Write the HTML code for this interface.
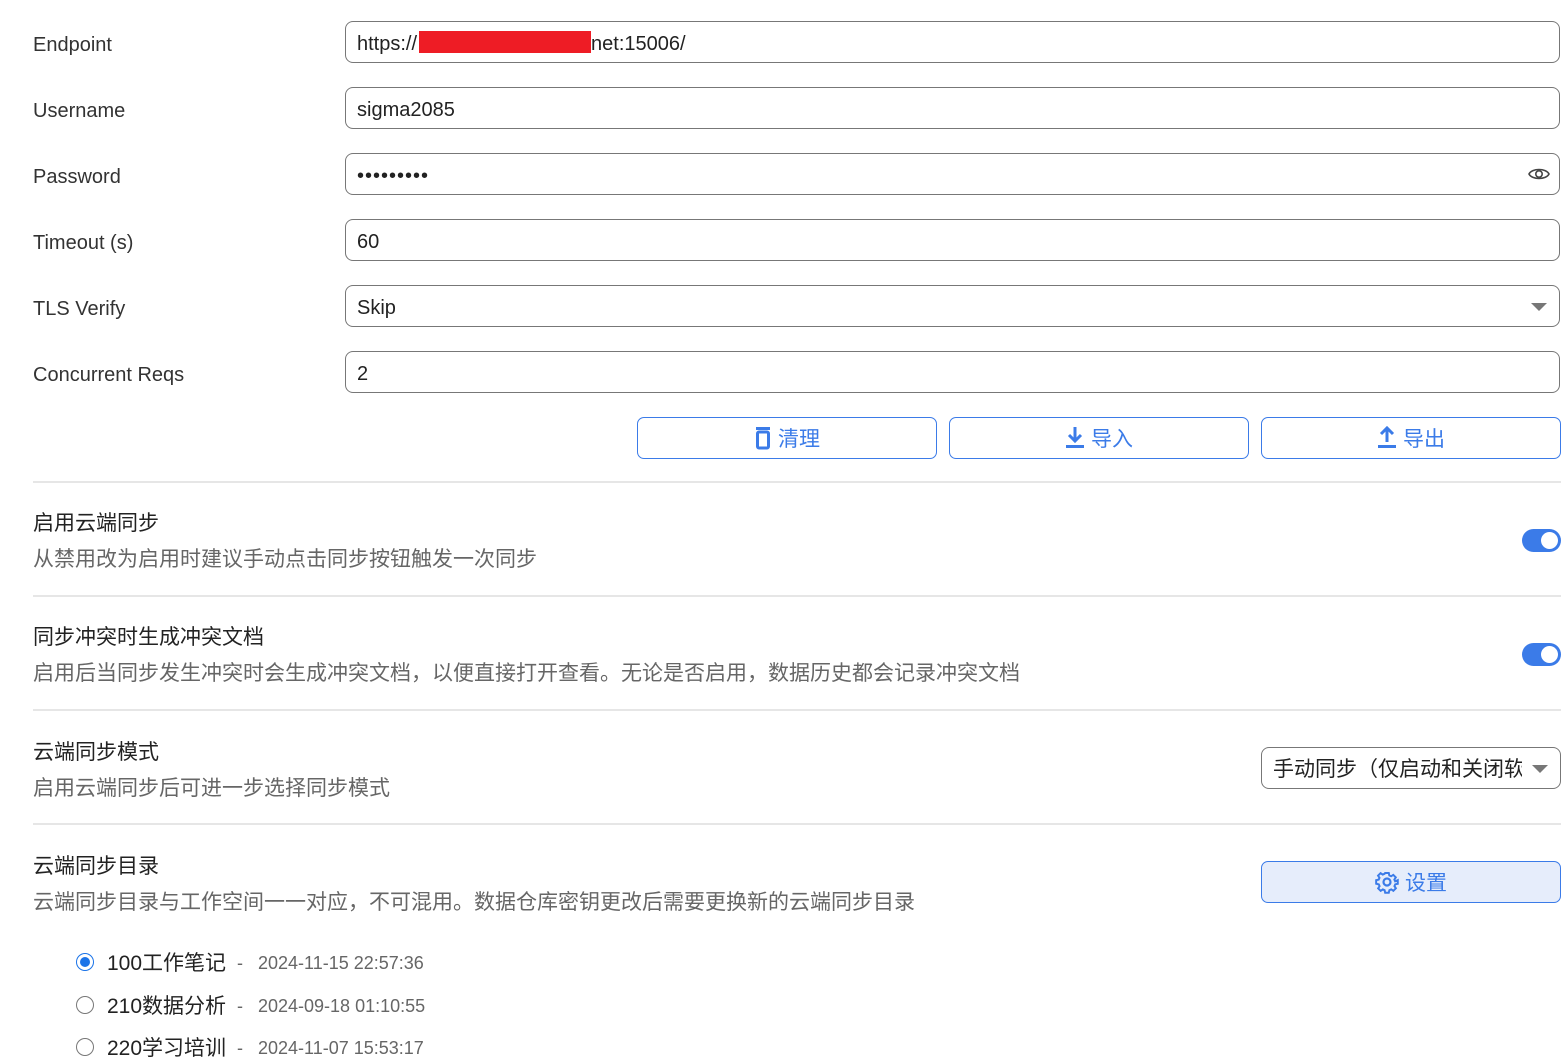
<!DOCTYPE html>
<html><head><meta charset="utf-8"><style>
*{box-sizing:border-box;margin:0;padding:0}
body{width:1566px;height:1047px;overflow:hidden;background:#fff;font-family:"Liberation Sans","Noto Sans CJK SC",sans-serif;color:#333;position:relative}
.a{position:absolute}
.lbl{position:absolute;left:33px;font-size:20px;color:#333;line-height:24px;margin-top:1px}
.inp{position:absolute;left:345px;width:1215px;height:42px;border:1px solid #777;border-radius:8px;font-size:20px;line-height:44px;padding-left:11px;color:#222}
.btn{position:absolute;top:417px;width:300px;height:42px;border:1px solid #3b7be8;border-radius:7px;color:#3b7be8;font-size:21px;display:flex;align-items:center;justify-content:center;gap:6px}
.sep{position:absolute;left:33px;width:1528px;height:2px;background:#e6e6e6}
.t{position:absolute;left:33px;font-size:21px;color:#222;line-height:24px;margin-top:1px}
.d{position:absolute;left:33px;font-size:21px;color:#666;line-height:24px;margin-top:1px}
.tog{position:absolute;left:1522px;width:39px;height:23px;border-radius:12px;background:#3b7be8}
.tog::after{content:"";position:absolute;right:3px;top:3px;width:17px;height:17px;border-radius:50%;background:#fff}
.caret{position:absolute;right:12px;top:17px;border-left:8px solid transparent;border-right:8px solid transparent;border-top:8px solid #777}
.radio{position:absolute;left:76px;width:18px;height:18px;border-radius:50%;border:1.5px solid #777}
.rt{position:absolute;left:107px;font-size:21px;color:#222;line-height:24px;margin-top:1px}
.rd{position:absolute;left:237px;font-size:18px;color:#666;line-height:24px}
</style></head><body>
<div class="lbl" style="top:32px">Endpoint</div>
<div class="inp" style="top:21px">https://<span style="display:inline-block;width:172px;height:22px;background:#ee1c25;vertical-align:-3px;margin-left:2px"></span>net:15006/</div>
<div class="lbl" style="top:98px">Username</div>
<div class="inp" style="top:87px">sigma2085</div>
<div class="lbl" style="top:164px">Password</div>
<div class="inp" style="top:153px;letter-spacing:1px">•••••••••
<svg class="a" style="right:8px;top:10px" width="24" height="20" viewBox="0 0 24 20"><path d="M2 10C5 4 19 4 22 10C19 16 5 16 2 10Z" fill="none" stroke="#444" stroke-width="1.6"/><circle cx="12" cy="10" r="3.2" fill="none" stroke="#444" stroke-width="1.6"/></svg></div>
<div class="lbl" style="top:230px">Timeout (s)</div>
<div class="inp" style="top:219px">60</div>
<div class="lbl" style="top:296px">TLS Verify</div>
<div class="inp" style="top:285px">Skip<div class="caret"></div></div>
<div class="lbl" style="top:362px">Concurrent Reqs</div>
<div class="inp" style="top:351px">2</div>

<div class="btn" style="left:637px"><svg width="18" height="24" viewBox="0 0 18 24"><rect x="2" y="1" width="14" height="3" fill="#3b7be8"/><rect x="3.5" y="6" width="11" height="16" rx="1.5" fill="none" stroke="#3b7be8" stroke-width="3"/></svg>清理</div>
<div class="btn" style="left:949px"><svg width="20" height="24" viewBox="0 0 20 24"><path d="M10 1V14M4 9L10 15L16 9" fill="none" stroke="#3b7be8" stroke-width="3"/><rect x="1" y="19" width="18" height="3" fill="#3b7be8"/></svg>导入</div>
<div class="btn" style="left:1261px"><svg width="20" height="24" viewBox="0 0 20 24"><path d="M10 16V3M4 8L10 2L16 8" fill="none" stroke="#3b7be8" stroke-width="3"/><rect x="1" y="19" width="18" height="3" fill="#3b7be8"/></svg>导出</div>

<div class="sep" style="top:481px"></div>
<div class="t" style="top:511px">启用云端同步</div>
<div class="d" style="top:547px">从禁用改为启用时建议手动点击同步按钮触发一次同步</div>
<div class="tog" style="top:529px"></div>
<div class="sep" style="top:595px"></div>
<div class="t" style="top:625px">同步冲突时生成冲突文档</div>
<div class="d" style="top:661px">启用后当同步发生冲突时会生成冲突文档，以便直接打开查看。无论是否启用，数据历史都会记录冲突文档</div>
<div class="tog" style="top:643px"></div>
<div class="sep" style="top:709px"></div>
<div class="t" style="top:740px">云端同步模式</div>
<div class="d" style="top:776px">启用云端同步后可进一步选择同步模式</div>
<div class="inp" style="top:747px;left:1261px;width:300px;overflow:hidden;white-space:nowrap;font-size:21px">手动同步（仅启动和关闭软<div class="caret" style="background:#fff;box-shadow:0 0 0 10px #fff"></div></div>
<div class="sep" style="top:823px"></div>
<div class="t" style="top:854px">云端同步目录</div>
<div class="d" style="top:890px">云端同步目录与工作空间一一对应，不可混用。数据仓库密钥更改后需要更换新的云端同步目录</div>
<div class="btn" style="left:1261px;top:861px;background:#e6edfb;border-width:1.5px"><svg width="24" height="24" viewBox="0 0 24 24"><path d="M10 2h4l.6 2.8 2 .9 2.4-1.6 2.8 2.8-1.6 2.4.9 2L24 10v4l-2.8.6-.9 2 1.6 2.4-2.8 2.8-2.4-1.6-2 .9L14 24h-4l-.6-2.8-2-.9-2.4 1.6-2.8-2.8 1.6-2.4-.9-2L0 14v-4l2.8-.6.9-2L2.1 5 4.9 2.2 7.3 3.8l2-.9Z" transform="scale(.9) translate(1.3 1.3)" fill="none" stroke="#3b7be8" stroke-width="2.2"/><circle cx="12" cy="12" r="3.5" fill="none" stroke="#3b7be8" stroke-width="2.2"/></svg>设置</div>

<div class="radio" style="top:953px;border:1.5px solid #1a73e8"><div style="position:absolute;left:2.5px;top:2.5px;width:10px;height:10px;border-radius:50%;background:#1a73e8"></div></div>
<div class="rt" style="top:951px">100工作笔记</div><div class="rd" style="top:951px">-&nbsp;&nbsp;&nbsp;2024-11-15 22:57:36</div>
<div class="radio" style="top:996px"></div>
<div class="rt" style="top:994px">210数据分析</div><div class="rd" style="top:994px">-&nbsp;&nbsp;&nbsp;2024-09-18 01:10:55</div>
<div class="radio" style="top:1038px"></div>
<div class="rt" style="top:1036px">220学习培训</div><div class="rd" style="top:1036px">-&nbsp;&nbsp;&nbsp;2024-11-07 15:53:17</div>
</body></html>
